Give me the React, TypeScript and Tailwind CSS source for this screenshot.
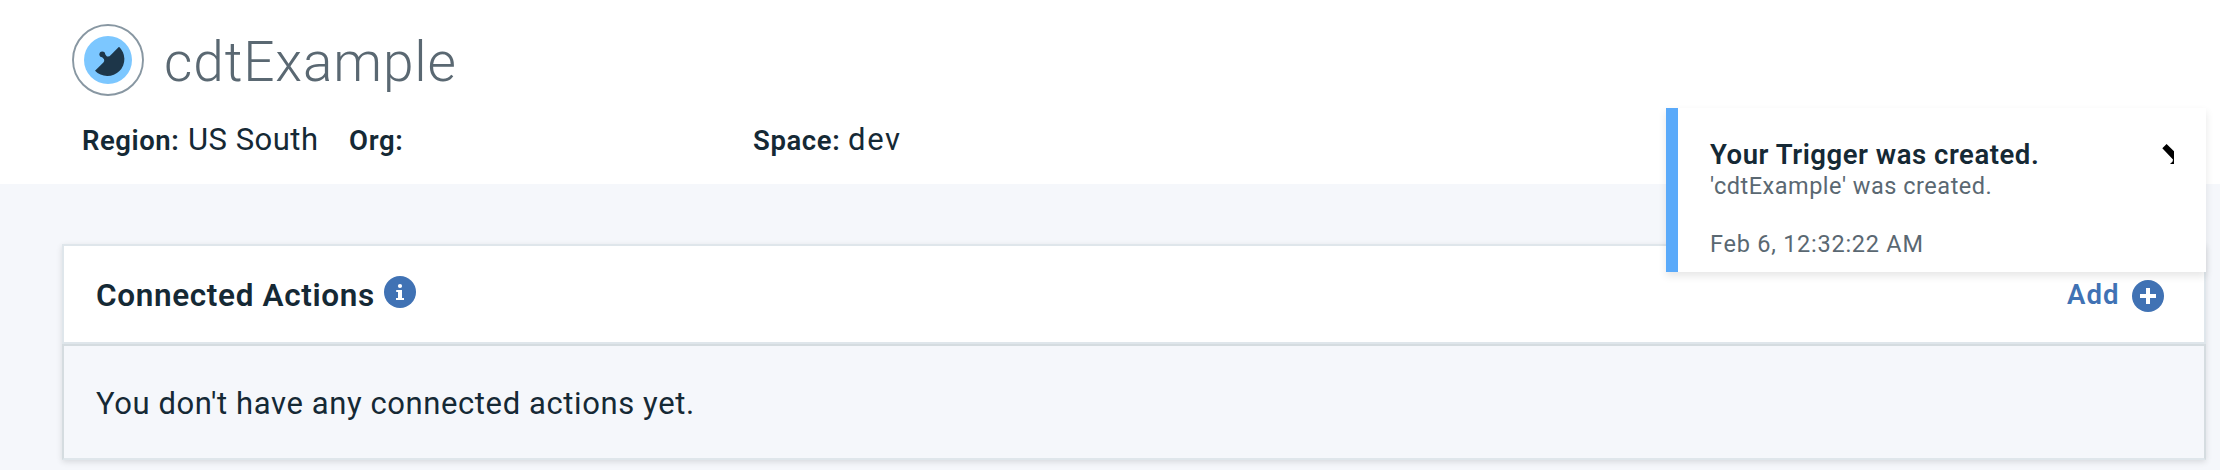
import React from 'react';

function TriggerIcon() {
  return (
    <svg width="72" height="72" viewBox="0 0 72 72" className="block shrink-0">
      <circle cx="36" cy="36" r="35" fill="#fff" stroke="#8897a2" strokeWidth="1.9" />
      <circle cx="36" cy="36" r="24" fill="#7cc7ff" />
      <path d="M47 22.7A16.98 16.98 0 1 1 23 46.7L31.4 38.4Q32.8 37 32 35.2L29.6 32.6L32.6 29.8L35 32.4Q37.2 33 38.8 31Z" fill="#1d3649" />
      <circle cx="30.3" cy="30.3" r="2.9" fill="#1d3649" />
    </svg>
  );
}

function InfoIcon() {
  return (
    <svg width="32" height="32" viewBox="0 0 32 32" className="block shrink-0">
      <circle cx="16" cy="16" r="16" fill="#4072b4" />
      <circle cx="16" cy="10" r="2.1" fill="#fff" />
      <path d="M12.2 14H18v8h2v2h-8v-2h2v-6h-1.8z" fill="#fff" />
    </svg>
  );
}

function AddIcon() {
  return (
    <svg width="32" height="32" viewBox="0 0 32 32" className="block shrink-0">
      <circle cx="16" cy="16" r="16" fill="#4072b4" />
      <path d="M14 8h4v6h6v4h-6v6h-4v-6H8v-4h6z" fill="#fff" />
    </svg>
  );
}

function CloseIcon() {
  return (
    <svg width="12" height="20" viewBox="0 0 12 20" className="block shrink-0">
      <path d="M0.3 4.3L4.6 0L12 7.3V20H8L10.6 17.6L11 15.4Z" fill="#000" />
    </svg>
  );
}

function Toast() {
  return (
    <div className="absolute left-[1666px] top-[108px] flex h-[164px] w-[540px] items-start justify-between border-l-[12px] border-[#5aaafa] bg-white pl-8 pr-8 pt-7 shadow-[0_4px_8px_0_rgba(0,0,0,0.1)]">
      <div>
        <div className="text-[27.5px] font-semibold leading-[38px] tracking-[0.54px] text-[#152935]">Your Trigger was created.</div>
        <div className="-mt-px text-[23.5px] leading-[26px] tracking-[0.51px] text-[#5a6872]">'cdtExample' was created.</div>
        <div className="mt-8 text-[23.5px] leading-[26px] tracking-[0.75px] text-[#5a6872]">Feb 6, 12:32:22 AM</div>
      </div>
      <div className="mt-2"><CloseIcon /></div>
    </div>
  );
}

export default function App() {
  return (
    <div className="relative h-[470px] w-[2220px] overflow-hidden bg-[#f5f7fb] font-['Roboto',sans-serif] text-[#152935]">
      <header className="h-[184px] bg-white pl-[72px] pt-6">
        <div className="flex h-[72px] items-center">
          <TriggerIcon />
          <h1 className="ml-5 pt-[3px] text-[55px] font-light leading-[72px] tracking-[0.86px] text-[#5a6872]">cdtExample</h1>
        </div>
        <div className="mt-6 flex items-baseline pl-[10px] leading-10">
          <span className="w-[106px] text-[27.5px] font-semibold tracking-[0.55px]">Region:</span>
          <span className="w-[161px] text-[31px] tracking-[0.5px]">US South</span>
          <span className="w-[404px] text-[27.5px] font-semibold tracking-[0.7px]">Org:</span>
          <span className="w-[95px] text-[27.5px] font-semibold tracking-[0.6px]">Space:</span>
          <span className="text-[31px] tracking-[1.7px]">dev</span>
        </div>
      </header>
      <main className="pl-[62px] pt-[60px]">
        <section className="w-[2144px] shadow-[0_2px_6px_0_rgba(0,0,0,0.12)]">
          <div className="flex h-[100px] items-center justify-between border-2 border-[#dfe6eb] bg-white pl-8 pr-[40px]">
            <div className="flex items-center">
              <h2 className="w-[288px] pt-[3px] text-[31.5px] font-semibold leading-10 tracking-[0.64px]">Connected Actions</h2>
              <div className="-mt-1"><InfoIcon /></div>
            </div>
            <div className="flex items-center text-[#4072b4]">
              <span className="w-[65px] pt-0.5 text-[27.5px] font-semibold leading-10 tracking-[1.1px]">Add</span>
              <div className="mt-1"><AddIcon /></div>
            </div>
          </div>
          <div className="flex h-[116px] items-center border-2 border-b-[#dfe6eb] border-l-[#d5dce0] border-r-[#d5dce0] border-t-[#d5dce0] bg-[#f5f7fb] pl-8">
            <p className="pt-[3px] text-[31px] leading-10 tracking-[0.6px]">You don't have any connected actions yet.</p>
          </div>
        </section>
      </main>
      <Toast />
    </div>
  );
}
